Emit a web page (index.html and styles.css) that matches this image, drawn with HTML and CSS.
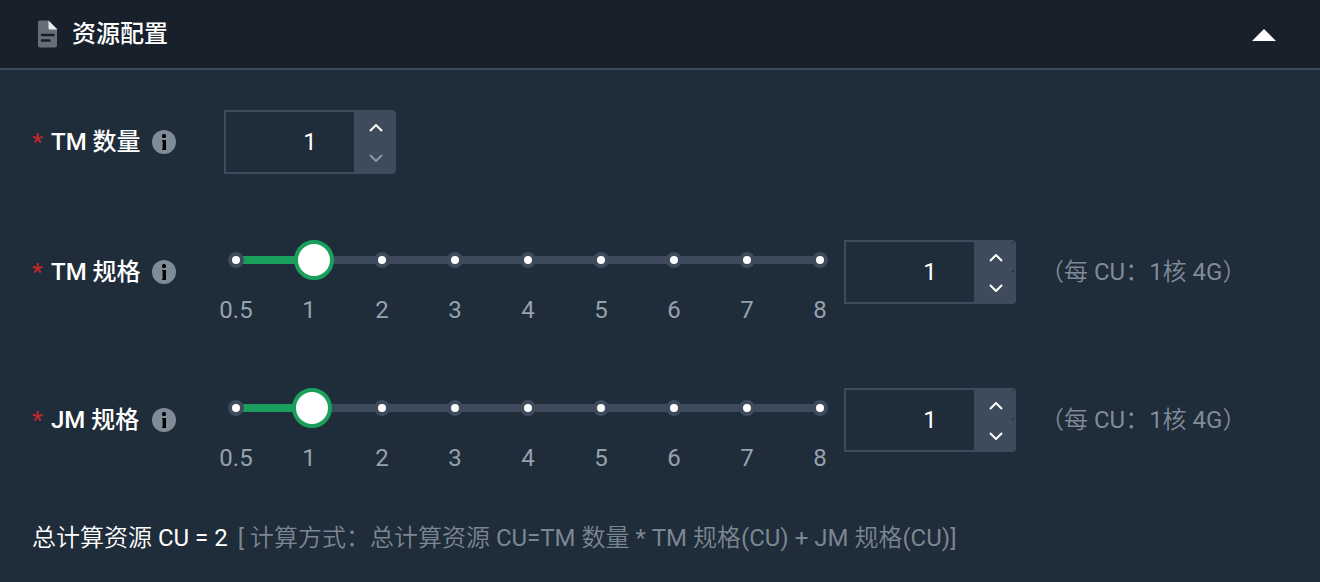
FILE: index.html
```html
<!DOCTYPE html>
<html lang="zh-CN">
<head>
<meta charset="utf-8">
<meta name="viewport" content="width=device-width, initial-scale=1">
<title>资源配置</title>
<link rel="stylesheet" href="styles.css">
</head>
<body>
<svg class="sprite" aria-hidden="true">
  <symbol id="info" viewBox="0 0 24 24">
    <circle cx="12" cy="12" r="12" fill="#808b98"/>
    <rect x="10" y="4" width="4" height="4" rx="1.500" fill="#000"/>
    <path d="M10 10h4v10h-4v-1h.6V11H10z" fill="#000"/>
  </symbol>
  <symbol id="up" viewBox="0 0 14 8"><path d="M1 7l6-6 6 6" fill="none" stroke="currentColor" stroke-width="2"/></symbol>
  <symbol id="down" viewBox="0 0 14 8"><path d="M1 1l6 6 6-6" fill="none" stroke="currentColor" stroke-width="2"/></symbol>
</svg>
<section class="panel">
  <header class="panel-header">
    <svg class="doc-icon" viewBox="0 0 20 28" aria-hidden="true">
      <path d="M2 0.5h8.5L19 9.5V25.500a2 2 0 0 1-2 2H2a2 2 0 0 1-2-2V2.500a2 2 0 0 1 2-2z" fill="#666f78"/>
      <path d="M10.500 0.500l9 9h-7.500a1.500 1.500 0 0 1-1.500-1.500z" fill="#e9ebee"/>
      <path d="M4 15h11.500M4 20.500h7.500" stroke="#16202b" stroke-width="2.500" stroke-linecap="round"/>
    </svg>
    <h1 class="panel-title">资源配置</h1>
    <button class="collapse" type="button" aria-label="收起">
      <svg class="caret" viewBox="0 0 24 12"><path d="M12 0l12 12H0z" fill="#fff"/></svg>
    </button>
  </header>

  <form class="panel-body">
    <div class="row">
      <div class="label-cell">
        <span class="required">*</span>
        <label class="label" for="tm-count">TM 数量</label>
        <svg class="info"><use href="#info"/></svg>
      </div>
      <div class="number">
        <input id="tm-count" class="number-input" type="text" inputmode="numeric" value="1">
        <div class="stepper">
          <button class="step" type="button" aria-label="增加"><svg class="chevron"><use href="#up"/></svg></button>
          <button class="step" type="button" aria-label="减少" disabled><svg class="chevron"><use href="#down"/></svg></button>
        </div>
      </div>
    </div>

    <div class="row row-spec">
      <div class="label-cell">
        <span class="required">*</span>
        <label class="label" for="tm-spec">TM 规格</label>
        <svg class="info"><use href="#info"/></svg>
      </div>
      <div class="slider">
        <div class="rail">
          <span class="dot"></span><span class="dot"></span><span class="dot"></span><span class="dot"></span><span class="dot"></span><span class="dot"></span><span class="dot"></span><span class="dot"></span><span class="dot"></span>
          <input class="range" type="range" min="0" max="8" step="0.01" value="1.07" aria-label="TM 规格">
        </div>
        <div class="ticks">
          <span>0.5</span><span>1</span><span>2</span><span>3</span><span>4</span><span>5</span><span>6</span><span>7</span><span>8</span>
        </div>
      </div>
      <div class="number">
        <input id="tm-spec" class="number-input" type="text" inputmode="decimal" value="1">
        <div class="stepper">
          <button class="step step-round" type="button" aria-label="增加"><svg class="chevron"><use href="#up"/></svg></button>
          <button class="step" type="button" aria-label="减少"><svg class="chevron"><use href="#down"/></svg></button>
        </div>
      </div>
      <span class="note">（每 CU：1核 4G）</span>
    </div>

    <div class="row row-spec">
      <div class="label-cell">
        <span class="required">*</span>
        <label class="label" for="jm-spec">JM 规格</label>
        <svg class="info"><use href="#info"/></svg>
      </div>
      <div class="slider">
        <div class="rail">
          <span class="dot"></span><span class="dot"></span><span class="dot"></span><span class="dot"></span><span class="dot"></span><span class="dot"></span><span class="dot"></span><span class="dot"></span><span class="dot"></span>
          <input class="range" type="range" min="0" max="8" step="0.01" value="1.04" aria-label="JM 规格">
        </div>
        <div class="ticks">
          <span>0.5</span><span>1</span><span>2</span><span>3</span><span>4</span><span>5</span><span>6</span><span>7</span><span>8</span>
        </div>
      </div>
      <div class="number">
        <input id="jm-spec" class="number-input" type="text" inputmode="decimal" value="1">
        <div class="stepper">
          <button class="step step-round" type="button" aria-label="增加"><svg class="chevron"><use href="#up"/></svg></button>
          <button class="step" type="button" aria-label="减少"><svg class="chevron"><use href="#down"/></svg></button>
        </div>
      </div>
      <span class="note">（每 CU：1核 4G）</span>
    </div>

    <p class="summary">总计算资源 CU = 2 <span class="formula">[ 计算方式：总计算资源 CU=TM 数量 * TM 规格(CU) + JM 规格(CU)]</span></p>
  </form>
</section>
</body>
</html>
```
FILE: styles.css
```css
* { box-sizing: border-box; }

body {
  margin: 0;
  background: #1f2c39;
  color: #fff;
  font: 400 24px/32px Roboto, "Noto Sans CJK SC DemiLight", "Noto Sans CJK SC", sans-serif;
}

.sprite { position: absolute; width: 0; height: 0; }

button { padding: 0; border: 0; background: none; color: inherit; }

.panel-header {
  display: flex;
  align-items: center;
  height: 70px;
  padding: 0 44px 0 38px;
  background: #17202b;
  border-bottom: 2px solid #3d4b5c;
}

.doc-icon { width: 20px; height: 28px; }

.panel-title {
  margin: 0 auto 0 14px;
  font-family: Roboto, "Noto Sans CJK SC", sans-serif;
  font-size: 24px;
  font-weight: 500;
}

.collapse { display: flex; padding-top: 2px; }
.caret { width: 24px; height: 12px; }

.panel-body { padding: 40px 32px 24px; }

.row {
  display: flex;
  align-items: flex-start;
  margin-bottom: 66px;
}

.row-spec { margin-bottom: 62px; }
.row-spec:nth-child(3) { margin-bottom: 48px; }

.label-cell {
  display: flex;
  align-items: center;
  flex: 0 0 192px;
  height: 64px;
  font-family: Roboto, "Noto Sans CJK SC", sans-serif;
  font-weight: 500;
}

.required { width: 19px; color: #c0282d; }
.label { width: 101px; }
.info { width: 24px; height: 24px; }

.number {
  display: flex;
  flex: none;
  width: 172px;
  height: 64px;
  border: 2px solid #3d4b5c;
  border-radius: 0 4px 4px 0;
}

.number-input {
  flex: 1;
  width: 0;
  min-width: 0;
  padding: 0 0 0 40px;
  border: 0;
  outline: 0;
  background: transparent;
  color: inherit;
  font: inherit;
  text-align: center;
}

.stepper { display: flex; flex: none; flex-direction: column; width: 40px; }

.step {
  display: flex;
  flex: 1;
  align-items: center;
  justify-content: center;
  padding: 2px 0 0 4px;
  background: #3d4b5c;
}

.step-round { border-radius: 0 4px 4px 0; }
.step:disabled { color: #8e98a4; }
.chevron { width: 14px; height: 8px; }

.slider { flex: 1; margin-right: 12px; padding: 0 12px; }

.rail {
  position: relative;
  display: flex;
  align-items: center;
  justify-content: space-between;
  height: 40px;
  margin: 0 -8px;
  background: linear-gradient(#3d4b5c, #3d4b5c) center / calc(100% - 16px) 8px no-repeat;
}

.dot {
  z-index: 1;
  width: 16px;
  height: 16px;
  border: 4px solid #3d4b5c;
  border-radius: 50%;
  background: #fff;
}

.dot:nth-child(2) { visibility: hidden; }

.range {
  position: absolute;
  left: -12px;
  width: calc(100% + 24px);
  height: 40px;
  margin: 0;
  appearance: none;
  background: linear-gradient(#1a9f5c, #1a9f5c) 20px center / 12% 8px no-repeat;
}

.range::-webkit-slider-thumb {
  appearance: none;
  width: 40px;
  height: 40px;
  border: 4px solid #1a9f5c;
  border-radius: 50%;
  background: #fff;
}

.ticks {
  display: flex;
  justify-content: space-between;
  margin: 14px -24px 0;
  color: #97a1ad;
}

.ticks span { width: 48px; text-align: center; }

.note {
  flex: 0 0 248px;
  margin-left: 24px;
  line-height: 64px;
  color: #808b98;
  white-space: nowrap;
}

.summary { margin: 0; }
.formula { margin-left: 4px; color: #7b8692; }
```
